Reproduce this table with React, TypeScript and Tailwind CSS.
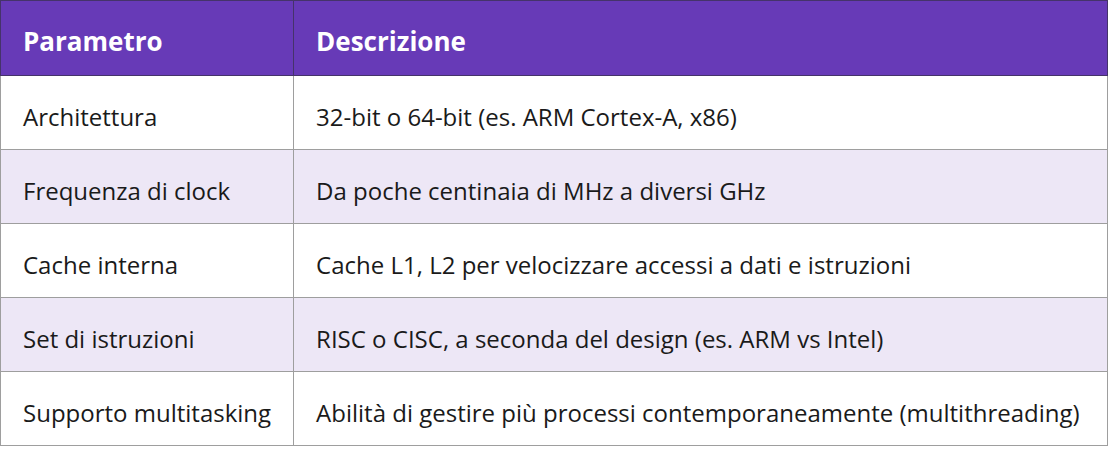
import React from "react";

const rows = [
  ["Architettura", "32-bit o 64-bit (es. ARM Cortex-A, x86)"],
  ["Frequenza di clock", "Da poche centinaia di MHz a diversi GHz"],
  ["Cache interna", "Cache L1, L2 per velocizzare accessi a dati e istruzioni"],
  ["Set di istruzioni", "RISC o CISC, a seconda del design (es. ARM vs Intel)"],
  ["Supporto multitasking", "Abilità di gestire più processi contemporaneamente (multithreading)"],
];

export default function App() {
  return (
    <div className="w-[1109px] h-[449px] bg-white" style={{ fontFamily: '"Open Sans", "Noto Sans", sans-serif' }}>
      <table className="w-[1108px] border-collapse text-[24px] text-[#1a1a1a]">
        <thead>
          <tr className="bg-[#673ab7] text-white h-[75px]">
            <th className="border border-[#45336a] text-left font-bold text-[26px] px-[22px] pt-[6px] w-[293px]">Parametro</th>
            <th className="border border-[#45336a] text-left font-bold text-[26px] px-[22px] pt-[6px]">Descrizione</th>
          </tr>
        </thead>
        <tbody>
          {rows.map(([a, b], i) => (
            <tr key={a} className={(i % 2 === 1 ? "bg-[#ede7f6]" : "bg-white") + " h-[74px]"}>
              <td className="border border-[#9e9e9e] px-[22px] pt-[8px] whitespace-nowrap">{a}</td>
              <td className="border border-[#9e9e9e] px-[22px] pt-[8px] whitespace-nowrap">{b}</td>
            </tr>
          ))}
        </tbody>
      </table>
    </div>
  );
}
